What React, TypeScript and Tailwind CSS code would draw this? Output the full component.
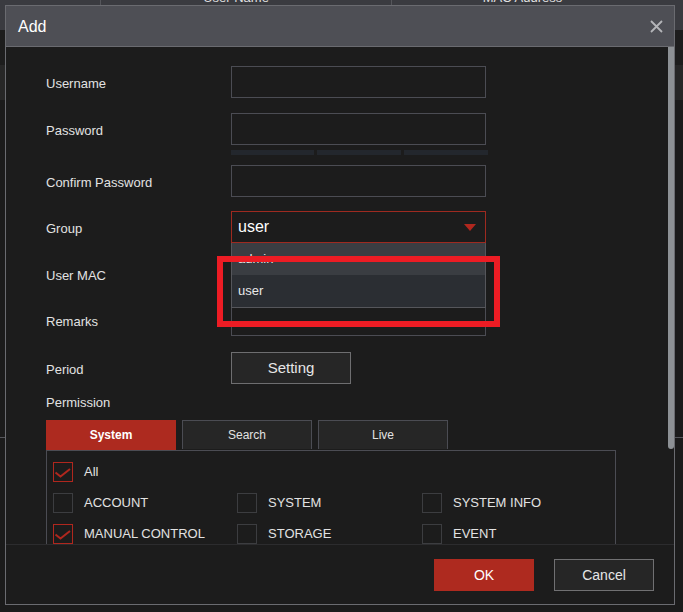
import React from "react";

const font = "font-['Liberation_Sans',Arial,sans-serif]";

function Field({ label, children }: { label: string; children?: React.ReactNode }) {
  return (
    <div className="flex flex-row items-center h-[32px]">
      <div className="w-[185px] pt-[3px] text-[13px] text-[#e2e2e2]">{label}</div>
      <div className="relative w-[255px] h-[32px]">{children}</div>
    </div>
  );
}

function Input() {
  return <div className="w-full h-full border border-[#4b4c53] bg-[#1c1c1c]" />;
}

function Check({ label, checked }: { label: string; checked?: boolean }) {
  return (
    <div className="flex flex-row items-center h-[20px] gap-[11px]">
      <div
        className={
          checked
            ? "w-[20px] h-[20px] border border-[#b0271e] flex items-center justify-center"
            : "w-[20px] h-[20px] border border-[#3c3d40]"
        }
      >
        {checked && (
          <svg width="18" height="18" viewBox="0 0 18 18">
            <polyline points="1.5,9.5 6.5,13.5 16,6" fill="none" stroke="#b0271e" strokeWidth="2" />
          </svg>
        )}
      </div>
      <span className="text-[13px] text-[#e2e2e2]">{label}</span>
    </div>
  );
}

export default function App() {
  return (
    <div className={`relative w-[683px] h-[612px] overflow-hidden bg-[#1b1b1b] ${font}`}>
      {/* page behind the dialog */}
      <div className="flex flex-col">
        <div className="h-[30px] bg-[#3a3b40] flex flex-row text-[13px] leading-[13px] text-[#e0e0e0]">
          <div className="w-[101px] border-r border-[#55565b]" />
          <div className="w-[291px] border-r border-[#55565b] flex justify-center">
            <span className="mt-[-9px] ml-[-20px]">User Name</span>
          </div>
          <div className="flex-1 flex justify-center">
            <span className="mt-[-9px] ml-[-30px]">MAC Address</span>
          </div>
        </div>
        <div className="h-[35px] bg-[#1d1d1d]" />
        <div className="h-[35px] bg-[#272727]" />
        <div className="h-[337px]" />
        <div className="h-[1px] bg-[#55565b]" />
      </div>

      {/* dialog */}
      <div className="absolute left-[5px] top-[5px] w-[670px] h-[600px] border border-[#6a6b70] bg-[#1c1c1c] flex flex-col">
        <div className="h-[41px] bg-[#4e4f55] border-b border-[#6a6b70] flex flex-row items-center justify-between pl-[12px] pr-[11px]">
          <span className="pt-[2px] text-[16px] text-white">Add</span>
          <svg width="13" height="13" viewBox="0 0 13 13">
            <path d="M1 1 L12 12 M12 1 L1 12" stroke="#b4b5b8" strokeWidth="1.8" />
          </svg>
        </div>

        <div className="flex flex-row h-[497px] overflow-hidden">
          <div className="flex-1 flex flex-col pl-[40px] pt-[19px]">
            <Field label="Username">
              <Input />
            </Field>
            <div className="mt-[15px]">
              <Field label="Password">
                <Input />
              </Field>
            </div>
            <div className="mt-[5px] ml-[185px] flex flex-row gap-[3px]">
              <div className="w-[83px] h-[5px] bg-[#23272d]" />
              <div className="w-[84px] h-[5px] bg-[#23272d]" />
              <div className="w-[84px] h-[5px] bg-[#23272d]" />
            </div>
            <div className="mt-[10px]">
              <Field label="Confirm Password">
                <Input />
              </Field>
            </div>
            <div className="mt-[14px] relative z-10">
              <Field label="Group">
                <div className="w-full h-full border border-[#9e2a20] bg-[#1c1c1c] flex flex-row items-center justify-between pl-[6px] pr-[9px]">
                  <span className="text-[16px] text-white">user</span>
                  <svg width="12" height="7" viewBox="0 0 12 7">
                    <polygon points="0,0 12,0 6,7" fill="#b0271e" />
                  </svg>
                </div>
                <div className="absolute left-0 top-[32px] w-[255px] flex flex-col border-x border-b border-[#55565b]">
                  <div className="h-[32px] bg-[#3a3d42] flex items-center pl-[6px] text-[13px] text-[#e8e8e8]">admin</div>
                  <div className="h-[32px] bg-[#2b2e33] flex items-center pl-[6px] text-[13px] text-[#e8e8e8]">user</div>
                </div>
              </Field>
            </div>
            <div className="mt-[15px]">
              <Field label="User MAC">
                <Input />
              </Field>
            </div>
            <div className="mt-[14px]">
              <Field label="Remarks">
                <Input />
              </Field>
            </div>
            <div className="mt-[16px]">
              <Field label="Period">
                <div className="w-[120px] h-[32px] border border-[#6e6e70] bg-[#262626] flex items-center justify-center text-[15px] text-[#e6e6e6]">
                  Setting
                </div>
              </Field>
            </div>
            <div className="mt-[9px] h-[18px] pt-[2px] flex items-center text-[13px] text-[#e2e2e2]">Permission</div>
            <div className="mt-[9px] flex flex-row gap-[6px] h-[30px] items-start">
              <div className="w-[130px] h-[30px] bg-[#ad2a1f] flex items-center justify-center text-[12px] font-bold text-white">
                System
              </div>
              <div className="w-[130px] h-[29px] bg-[#262626] border border-[#4b4c53] border-b-0 flex items-center justify-center text-[12px] text-[#e2e2e2]">
                Search
              </div>
              <div className="w-[130px] h-[29px] bg-[#262626] border border-[#4b4c53] border-b-0 flex items-center justify-center text-[12px] text-[#e2e2e2]">
                Live
              </div>
            </div>
            <div className="w-[570px] h-[120px] border border-[#4b4c53] pl-[6px] pt-[11px] flex flex-col gap-[11px]">
              <Check label="All" checked />
              <div className="grid grid-cols-[184px_185px_1fr] gap-y-[11px]">
                <Check label="ACCOUNT" />
                <Check label="SYSTEM" />
                <Check label="SYSTEM INFO" />
                <Check label="MANUAL CONTROL" checked />
                <Check label="STORAGE" />
                <Check label="EVENT" />
              </div>
            </div>
          </div>
          <div className="w-[6px] flex flex-col">
            <div className="h-[402px] bg-[#8d9195] rounded-b-[3px]" />
          </div>
        </div>

        <div className="flex-1 border-t border-[#2c2c2e] flex flex-row justify-end items-start gap-[20px] pt-[14px] pr-[20px]">
          <div className="w-[100px] h-[32px] bg-[#ae2a1f] flex items-center justify-center text-[14px] text-white">OK</div>
          <div className="w-[100px] h-[32px] bg-[#262626] border border-[#707072] flex items-center justify-center text-[14px] text-[#e6e6e6]">
            Cancel
          </div>
        </div>
      </div>

      {/* red highlight annotation */}
      <div className="absolute z-20 left-[217px] top-[256px] w-[283px] h-[71px] border-[6px] border-[#ed1c24]" />
    </div>
  );
}
